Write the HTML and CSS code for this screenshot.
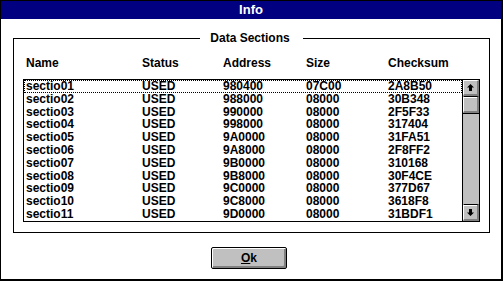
FILE: index.html
```html
<!DOCTYPE html>
<html lang="en">
<head>
    <meta charset="UTF-8">
    <title>Info</title>
    <link rel="stylesheet" href="styles.css">
</head>
<body>
    <div class="window">
        <div class="titlebar">Info</div>
        <div class="client">
            <!-- Data sections group -->
            <fieldset class="group">
                <legend>Data Sections</legend>
                <div class="cols header">
                    <span>Name</span><span>Status</span><span>Address</span><span>Size</span><span>Checksum</span>
                </div>
                <div class="listbox">
                    <div class="rows">
                        <div class="cols row focus"><span>sectio01</span><span>USED</span><span>980400</span><span>07C00</span><span>2A8B50</span></div>
                        <div class="cols row"><span>sectio02</span><span>USED</span><span>988000</span><span>08000</span><span>30B348</span></div>
                        <div class="cols row"><span>sectio03</span><span>USED</span><span>990000</span><span>08000</span><span>2F5F33</span></div>
                        <div class="cols row"><span>sectio04</span><span>USED</span><span>998000</span><span>08000</span><span>317404</span></div>
                        <div class="cols row"><span>sectio05</span><span>USED</span><span>9A0000</span><span>08000</span><span>31FA51</span></div>
                        <div class="cols row"><span>sectio06</span><span>USED</span><span>9A8000</span><span>08000</span><span>2F8FF2</span></div>
                        <div class="cols row"><span>sectio07</span><span>USED</span><span>9B0000</span><span>08000</span><span>310168</span></div>
                        <div class="cols row"><span>sectio08</span><span>USED</span><span>9B8000</span><span>08000</span><span>30F4CE</span></div>
                        <div class="cols row"><span>sectio09</span><span>USED</span><span>9C0000</span><span>08000</span><span>377D67</span></div>
                        <div class="cols row"><span>sectio10</span><span>USED</span><span>9C8000</span><span>08000</span><span>3618F8</span></div>
                        <div class="cols row"><span>sectio11</span><span>USED</span><span>9D0000</span><span>08000</span><span>31BDF1</span></div>
                    </div>
                    <div class="scrollbar">
                        <div class="arrow">
                            <svg width="7" height="7" viewBox="0 0 7 7"><path d="M3.5 0 L7 3.5 L5 3.5 L5 7 L2 7 L2 3.5 L0 3.5 Z" fill="#000"/></svg>
                        </div>
                        <div class="thumb"></div>
                        <div class="track"></div>
                        <div class="arrow arrow-down">
                            <svg width="7" height="7" viewBox="0 0 7 7"><path d="M3.5 7 L7 3.5 L5 3.5 L5 0 L2 0 L2 3.5 L0 3.5 Z" fill="#000"/></svg>
                        </div>
                    </div>
                </div>
            </fieldset>
            <div class="actions">
                <button class="btn"><u>O</u>k</button>
            </div>
        </div>
    </div>
</body>
</html>
```

FILE: styles.css
```css
body {
    margin: 0;
    padding: 0;
    font-family: 'Liberation Sans', Arial, sans-serif;
    font-weight: bold;
    font-size: 12px;
    color: #000;
    background-color: #ffffff;
}
.window {
    width: 503px;
    height: 281px;
    box-sizing: border-box;
    border: 1px solid #000;
    border-right-width: 2px;
    border-bottom-width: 2px;
    display: flex;
    flex-direction: column;
    background-color: #ffffff;
}
.titlebar {
    height: 18px;
    line-height: 18px;
    background-color: #000080;
    color: #ffffff;
    text-align: center;
    font-size: 13px;
}
.client {
    display: flex;
    flex-direction: column;
    padding: 12px 11px 0 12px;
}
.group {
    margin: 0;
    border: 1px solid #000;
    padding: 11px 9px 10px 9px;
    min-width: 0;
}
.group legend {
    margin: 0 auto;
    padding: 0 13px 0 10px;
    line-height: 14px;
}
.cols {
    display: grid;
    grid-template-columns: 116px 81px 83px 82px 1fr;
    white-space: nowrap;
}
.header {
    line-height: 14px;
    padding-left: 3px;
    margin-bottom: 9px;
}
.listbox {
    display: flex;
    border: 1px solid #000;
    height: 141px;
}
.rows {
    flex: 1;
    display: flex;
    flex-direction: column;
}
.row {
    height: 12.8px;
    line-height: 13px;
    padding-left: 2px;
}
.focus {
    outline: 1px dotted #000;
    outline-offset: -1px;
}
.scrollbar {
    width: 16px;
    border-left: 1px solid #000;
    display: flex;
    flex-direction: column;
    background-color: #c0c0c0;
}
.arrow, .thumb {
    height: 16px;
    box-sizing: border-box;
    background-color: #c0c0c0;
    border-top: 1px solid #fff;
    border-left: 1px solid #fff;
    border-right: 2px solid #808080;
    border-bottom: 2px solid #808080;
    display: flex;
    align-items: center;
    justify-content: center;
}
.arrow svg {
    display: block;
}
.thumb {
    height: 17px;
    border-top-color: #000;
    box-shadow: inset 0 1px #fff;
}
.track {
    flex: 1;
    border-top: 1px solid #000;
}
.arrow-down {
    height: 17px;
    border-top: 1px solid #000;
    box-shadow: inset 0 1px #fff;
}
.actions {
    display: flex;
    justify-content: center;
    padding: 14px 5px 0 0;
}
.btn {
    width: 76px;
    height: 22px;
    padding: 0;
    border: 1px solid #000;
    border-radius: 2px;
    background-color: #c0c0c0;
    box-shadow: inset 1px 1px #fff, inset -2px -2px #808080;
    font-family: 'Liberation Sans', Arial, sans-serif;
    font-weight: bold;
    font-size: 12px;
    color: #000;
}
```
